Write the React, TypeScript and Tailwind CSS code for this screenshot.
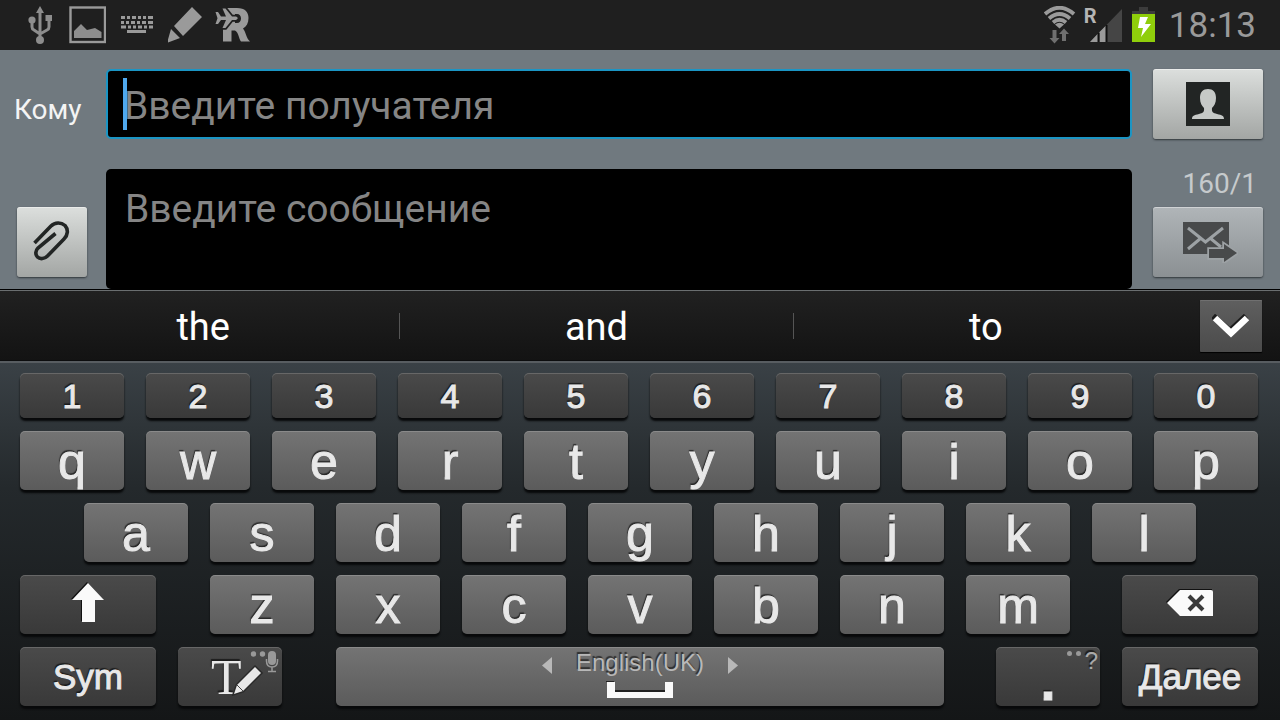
import type { ReactNode } from "react";

const keyBase =
  "relative flex items-center justify-center rounded-[5px] text-[#e8e8e8] min-w-0 shadow-[0_3px_2px_#08090a,inset_0_1px_0_rgba(255,255,255,0.16)] [-webkit-text-stroke:1px_#e8e8e8] [text-shadow:-1px_-2px_1px_rgba(0,0,0,0.6)]";
const dark = "bg-linear-to-b from-[#4a4a4a] to-[#393939]";
const light = "bg-linear-to-b from-[#747474] to-[#5b5b5b]";

function LetterKey({ children }: { children: string }) {
  return (
    <button type="button" className={`${keyBase} ${light} h-[59px] flex-[104] pt-[2px] text-[50px] leading-none`}>
      {children}
    </button>
  );
}

function FnKey({ label, className, children }: { label: string; className: string; children: ReactNode }) {
  return (
    <button type="button" aria-label={label} className={`${keyBase} ${dark} h-[59px] ${className}`}>
      {children}
    </button>
  );
}

function StatusBar() {
  return (
    <header className="flex h-[50px] items-center justify-between bg-[#1f1f1f] pl-[27px] pr-6 text-[#9a9a9a]">
      <div className="flex items-center gap-[15px]">
        <svg width="27" height="40" viewBox="0 0 27 40" aria-hidden="true">
          <path d="M5 15 V22 Q5 24 7 25 L13 29 M22 12 V22 Q22 24 20 25 L13 29 M13 7 V35" fill="none" stroke="#8d8d8d" strokeWidth="3" />
          <path d="M13 1 L17 8 H9 Z M18.500 10 H25 V16 H18.500 Z" fill="#8d8d8d" />
          <circle cx="5" cy="15" r="3.600" fill="#8d8d8d" />
          <circle cx="13" cy="35" r="4" fill="#8d8d8d" />
        </svg>
        <svg width="37" height="38" viewBox="0 0 37 38" aria-hidden="true">
          <rect x="1.500" y="1.500" width="34.500" height="34.500" fill="none" stroke="#9a9a9a" strokeWidth="2.400" />
          <path d="M5 32 V25 L12 18 L18 24 L26 22 L32.500 26 V32 Z" fill="#8d8d8d" />
        </svg>
        <svg width="32" height="18" viewBox="0 0 32 18" fill="#9a9a9a" aria-hidden="true">
          <path d="M0 0h4v3H0zM6 0h3v3H6zM11 0h4v3h-4zM17 0h3v3h-3zM22 0h3v3h-3zM27 0h5v3h-5zM0 5h3v3H0zM5 5h3v3H5zM10 5h4v3h-4zM16 5h3v3h-3zM21 5h4v3h-4zM27 5h5v3h-5zM0 9.500h5v3H0zM7 9.500h3v3H7zM12 9.500h3v3h-3zM17 9.500h4v3h-4zM23 9.500h3v3h-3zM28 9.500h4v3h-4zM6 14h19v3H6z" />
        </svg>
        <svg width="36" height="38" viewBox="0 0 36 38" fill="#9a9a9a" aria-hidden="true">
          <path d="M24 1 L34 11 L15 30 L6 20 Z M3 23 L12 32 L-1 37 Z" />
        </svg>
        <svg width="38" height="36" viewBox="0 0 38 36" aria-hidden="true" className="-ml-1">
          <path
            d="M9 1 H22 C30 1 33.500 5 33.500 11 C33.500 16 31.500 19.500 28 21.500 C31 25 31 31 35 34.500 H26 C23.500 31 24 26 20 23.500 H16.500 V34.500 H8 V20 Z M20 7 V16 H22 C24.500 16 26 14 26 11.500 C26 9 24.500 7 22 7 Z"
            fill="#9a9a9a"
            fillRule="evenodd"
          />
          <path
            d="M0.500 5 H3 L6 9.500 H11 L7.500 1.500 H10.500 L17 9.500 H21 Q24.500 11 21 13 H17 L10.500 21 H7.500 L11 13 H6 L3 17 H0.500 L2.500 11.200 Z"
            fill="#9a9a9a"
            stroke="#1f1f1f"
            strokeWidth="3.500"
            paintOrder="stroke"
          />
        </svg>
      </div>
      <div className="flex items-center">
        <svg width="34" height="38" viewBox="0 0 34 38" aria-hidden="true">
          <g fill="none" stroke="#9a9a9a" strokeWidth="3.800">
            <path d="M1 8 Q15.500 -4.500 30 8" />
            <path d="M5 12.500 Q15.500 3.500 26 12.500" />
            <path d="M9 16.500 Q15.500 11 22 16.500" />
          </g>
          <path d="M11 18.500 Q15.500 15 20 18.500 L15.500 22.500 Z" fill="#9a9a9a" />
          <path d="M8.500 24 h4 v8 h3 l-5 5.500 l-5 -5.500 h3z M18 35 h4 v-7 h3 l-5 -5.500 l-5 5.500 h3z" fill="#6f6f6f" />
        </svg>
        <div className="relative ml-[6px] h-[38px] w-10">
          <svg width="40" height="38" viewBox="0 0 40 38" aria-hidden="true">
            <path d="M38 3 V36 H6 Z" fill="#454545" />
            <path d="M14.500 27 V36 H6 Z M15.500 26 V36 H22 V19.500 Z" fill="#9a9a9a" />
            <path d="M14.500 27 V36 M22.500 19 V36" stroke="#111" strokeWidth="2" />
          </svg>
          <span className="absolute left-0 -top-px text-[20px] font-bold leading-[22px] text-[#b4b4b4]">R</span>
        </div>
        <svg width="23" height="36" viewBox="0 0 23 36" className="ml-2" aria-hidden="true">
          <path d="M7 0 H16 V4 H23 V7 H0 V4 H7 Z" fill="#3c3c3c" />
          <path d="M0 7 H23 V35 H0 Z" fill="#8fce0b" />
          <path d="M8 10 H16 L13 17 H19 L9 30 L11 21 H6 Z" fill="#fff" />
        </svg>
        <time className="ml-[14px] text-[35px] leading-none">18:13</time>
      </div>
    </header>
  );
}

const padButton =
  "flex h-[70px] items-center justify-center rounded-[3px] shadow-[0_1px_2px_#30363a,inset_0_1px_0_rgba(255,255,255,0.4)]";

function Compose() {
  return (
    <main className="bg-[#70797f]">
      <div className="flex items-center pr-[17px] pt-[19px]">
        <label htmlFor="to" className="w-[106px] pl-[14px] pt-3 text-[28px] leading-8 text-[#f4f4f4]">
          Кому
        </label>
        <div className="relative mr-[21px] min-w-0 flex-1">
          <input
            id="to"
            type="text"
            placeholder="Введите получателя"
            className="block h-[70px] w-full rounded-[5px] border-2 border-[#1b95c4] bg-black px-4 pt-1 text-[39px] text-white caret-transparent outline-none placeholder:text-[#858585]"
          />
          <span className="absolute left-[17px] top-[9px] h-[52px] w-1 bg-[#4fa8ee]" />
        </div>
        <button type="button" aria-label="Контакты" className={`${padButton} w-[110px] bg-linear-to-b from-[#dcdfdd] to-[#a3a6a4]`}>
          <svg width="44" height="44" viewBox="0 0 44 44" aria-hidden="true">
            <path d="M0 0H44V44H0Z" fill="#222524" />
            <path d="M22 7 C27 7 30 10 30 16 C30 21 28 24 26 26 C25.500 30 27 31 31 32 C36 33 38 34 38 37 H6 C6 34 8 33 13 32 C17 31 18.500 30 18 26 C16 24 14 21 14 16 C14 10 17 7 22 7 Z" fill="#c6c9c7" />
          </svg>
        </button>
      </div>
      <div className="flex items-end pr-[17px] pt-[29px]">
        <div className="w-[106px] pb-3 pl-[17px]">
          <button type="button" aria-label="Вложить" className={`${padButton} w-[70px] bg-linear-to-b from-[#dcdfdd] to-[#a3a6a4]`}>
            <svg width="38" height="42" viewBox="0 0 38 42" fill="none" stroke="#222524" strokeWidth="3.600" aria-hidden="true">
              <path d="M1.500 22 L18 5 C22 1 28 1 32 4.500 C35.500 8.500 35 14 31 18 L14.500 35 C11.500 38 7 38.500 4.500 36 C2 33.500 2.500 29.500 5 27 L22.500 12.500" />
            </svg>
          </button>
        </div>
        <textarea
          aria-label="Введите сообщение"
          placeholder="Введите сообщение"
          className="mr-[21px] block h-[120px] min-w-0 flex-1 resize-none rounded-[5px] bg-black px-[19px] pt-[17px] text-[39px] leading-[46px] text-white outline-none placeholder:text-[#858585]"
        />
        <div className="w-[110px] pb-3">
          <p className="pb-[7px] pr-[6px] text-right text-[28px] leading-8 text-[#c6cacc]">160/1</p>
          <button type="button" aria-label="Отправить" className={`${padButton} w-full bg-linear-to-b from-[#b0b5b8] to-[#8b9093]`}>
            <svg width="56" height="42" viewBox="0 0 56 42" className="ml-1" aria-hidden="true">
              <path d="M1 1H47V33H1Z" fill="#484a4b" />
              <path d="M6 7 L23.500 21 L41 7 M6 28 L19 17 M28 17 L39 26" fill="none" stroke="#9da2a5" strokeWidth="3" />
              <path d="M27 28 H42 V23 L55 32 L42 41 V37 H27 Z" fill="#484a4b" stroke="#9da2a5" strokeWidth="3.500" paintOrder="stroke" />
            </svg>
          </button>
        </div>
      </div>
    </main>
  );
}

function Suggestions() {
  const item = "h-full pt-[3px] text-[38px] leading-none text-white";
  return (
    <div className="flex h-[72px] items-center border-y border-b-[#0c0d0e] border-t-black bg-linear-to-b from-[#212121] to-[#131313] pl-[7px] pr-[18px] shadow-[inset_0_1px_0_#6a6e70]">
      <button type="button" className={`${item} flex-[393]`}>the</button>
      <span className="mt-[2px] h-[26px] w-px bg-[#555]" />
      <button type="button" className={`${item} flex-[393]`}>and</button>
      <span className="mt-[2px] h-[26px] w-px bg-[#555]" />
      <button type="button" className={`${item} flex-[385]`}>to</button>
      <button type="button" aria-label="Скрыть" className="ml-[22px] mt-[2px] flex h-[52px] w-[62px] items-center justify-center rounded-[1px] bg-linear-to-b from-[#5f5f5f] to-[#4b4b4b] shadow-[0_1px_1px_#000,inset_0_1px_0_#707070]">
        <svg width="38" height="24" viewBox="0 0 38 24" fill="none" aria-hidden="true">
          <path d="M1 2 L18 17 L34 2" stroke="#1d1d1d" strokeWidth="6" />
          <path d="M3 4 L19 19 L35 4" stroke="#fff" strokeWidth="6.500" />
        </svg>
      </button>
    </div>
  );
}

function Keyboard() {
  return (
    <section
      aria-label="Клавиатура"
      className="flex flex-col gap-[13px] border-t-2 border-[#585d61] bg-linear-to-b from-[#3a4146] via-[#24292c] via-35% to-[#141617] pb-[14px] pt-[10px] font-['Liberation_Sans',sans-serif]"
    >
      <div className="flex gap-[22px] pl-5 pr-[22px]">
        {"1234567890".split("").map((c) => (
          <button type="button" key={c} className={`${keyBase} ${dark} h-[45px] flex-[104] text-[34px] leading-none`}>
            {c}
          </button>
        ))}
      </div>
      <div className="flex gap-[22px] pl-5 pr-[22px]">
        {"qwertyuiop".split("").map((c) => <LetterKey key={c}>{c}</LetterKey>)}
      </div>
      <div className="flex gap-[22px] px-[84px]">
        {"asdfghjkl".split("").map((c) => <LetterKey key={c}>{c}</LetterKey>)}
      </div>
      <div className="flex gap-[22px] pl-5 pr-[22px]">
        <FnKey label="Shift" className="mr-8 flex-[136]">
          <svg width="34" height="42" viewBox="0 0 34 42" aria-hidden="true" className="-mt-1">
            <path d="M16 0 L32 17 H22 V39 H10 V17 H0 Z" fill="#111" />
            <path d="M17 1 L33 18 H24 V40 H11 V18 H1 Z" fill="#fafafa" />
          </svg>
        </FnKey>
        {"zxcvbnm".split("").map((c) => <LetterKey key={c}>{c}</LetterKey>)}
        <FnKey label="Backspace" className="ml-[30px] flex-[136]">
          <svg width="48" height="28" viewBox="0 0 48 28" aria-hidden="true" className="-mt-1">
            <path d="M0 13 L13 0 H46 V26 H13 Z" fill="#111" />
            <path d="M1 14 L14 1 H45 Q47 1 47 3 V27 H14 Z" fill="#fafafa" />
            <path d="M23 7 L37 21 M37 7 L23 21" stroke="#3a3a3a" strokeWidth="4" />
          </svg>
        </FnKey>
      </div>
      <div className="flex gap-[22px] pl-5 pr-[22px]">
        <FnKey label="Sym" className="flex-[136] text-[35px] leading-none">Sym</FnKey>
        <FnKey label="Ввод" className="mr-8 flex-[104]">
          <span className="absolute left-[33px] top-0 font-['Liberation_Serif',serif] text-[50px] leading-[60px] [-webkit-text-stroke:0px]">
            T
          </span>
          <svg width="70" height="56" viewBox="0 0 70 56" className="absolute right-0 top-0" aria-hidden="true">
            <path d="M22 47 L25 38 L43 20 L49 26 L31 44 Z" fill="#e8e8e8" stroke="#2a2a2a" strokeWidth="3" paintOrder="stroke" />
            <path d="M25 38 L31 44" stroke="#444" strokeWidth="1" />
            <circle cx="41.500" cy="7" r="2.700" fill="#999" />
            <circle cx="50.500" cy="7" r="2.700" fill="#999" />
            <rect x="56" y="4" width="8" height="14" rx="4" fill="#999" />
            <path d="M54.500 12 V14 Q54.500 20 60 20 Q65.500 20 65.500 14 V12 M60 20 V24 M56 24.500 H64" fill="none" stroke="#999" strokeWidth="1.500" />
          </svg>
        </FnKey>
        <button type="button" aria-label="Пробел" className={`${keyBase} ${light} h-[59px] flex-[608] flex-col justify-start`}>
          <span className="flex items-center gap-6 pt-[2px] text-[24px] leading-7 text-[#b8b8b8] [-webkit-text-stroke:0px]">
            <svg width="10" height="17" viewBox="0 0 10 17" className="mt-1" aria-hidden="true"><path d="M10 0V17L0 8.500Z" fill="#b8b8b8" /></svg>
            English(UK)
            <svg width="10" height="17" viewBox="0 0 10 17" className="mt-1" aria-hidden="true"><path d="M0 0V17L10 8.500Z" fill="#b8b8b8" /></svg>
          </span>
          <svg width="68" height="18" viewBox="0 0 68 18" className="mt-1" aria-hidden="true">
            <path d="M1 1H9V10H59V1H67V17H1Z" fill="#fafafa" />
            <path d="M0 0H8 M9 10H59" stroke="#222" strokeWidth="2" />
          </svg>
        </button>
        <FnKey label="Точка" className="ml-[30px] flex-[104] pt-2 text-[54px] font-bold leading-none">
          .
          <span className="absolute right-[2px] top-0 flex items-start gap-1 text-[24px] font-normal leading-7 text-[#aaa] [-webkit-text-stroke:0px]">
            <span className="mt-1 size-[5px] rounded-full bg-[#999]" />
            <span className="mt-1 size-[5px] rounded-full bg-[#999]" />
            ?
          </span>
        </FnKey>
        <FnKey label="Далее" className="flex-[136] text-[35px] leading-none">Далее</FnKey>
      </div>
    </section>
  );
}

export default function App() {
  return (
    <div className="min-h-screen bg-[#141617] font-[Roboto,sans-serif]">
      <StatusBar />
      <Compose />
      <Suggestions />
      <Keyboard />
    </div>
  );
}
